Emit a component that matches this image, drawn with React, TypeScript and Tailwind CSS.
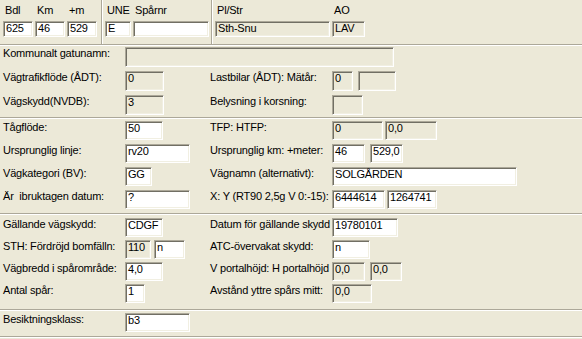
import React from 'react';

type BoxProps = { c: string; v?: string; off?: boolean };

function Box({ c, v, off }: BoxProps) {
  return (
    <div
      className={`${c} shrink-0 overflow-hidden whitespace-nowrap border border-t-[#ACA899] border-l-[#ACA899] border-b-white border-r-white shadow-[inset_1px_1px_0_#716F64,inset_-1px_-1px_0_#F1EFE2] pl-[2px] pt-[1px] leading-[11px] ${
        off ? 'bg-[#ECE9D8]' : 'bg-white'
      }`}
    >
      {v}
    </div>
  );
}

function Sep() {
  return <div className="h-[2px] w-full border-t border-t-[#ACA899] border-b border-b-white" />;
}

function VSep() {
  return <div className="w-[2px] h-full border-l border-l-[#ACA899] border-r border-r-white" />;
}

function Row({
  h,
  label,
  left,
  rlabel,
  right,
}: {
  h: string;
  label: string;
  left: React.ReactNode;
  rlabel?: string;
  right?: React.ReactNode;
}) {
  return (
    <div className={`flex items-start ${h}`}>
      <span className="w-[125px] shrink-0 pl-[3px] leading-[13px] whitespace-nowrap">{label}</span>
      <div className="w-[85px] shrink-0 flex gap-[3px] h-full">{left}</div>
      {rlabel !== undefined && (
        <span className="w-[122px] shrink-0 leading-[13px] whitespace-nowrap">{rlabel}</span>
      )}
      {right && <div className="flex gap-[2px] h-full">{right}</div>}
    </div>
  );
}

function Head({ label, c, v, off }: { label: string; c: string; v?: string; off?: boolean }) {
  return (
    <div className="flex flex-col">
      <span className="pl-[2px] h-[13px] leading-[13px] whitespace-nowrap">{label}</span>
      <div className="mt-[4px]">
        <Box c={c} v={v} off={off} />
      </div>
    </div>
  );
}

export default function App() {
  return (
    <div className="w-[582px] h-[339px] overflow-hidden bg-[#ECE9D8] text-black text-[11px] tracking-[-0.2px] font-['Liberation_Sans',Arial,sans-serif] flex flex-col">
      {/* header */}
      <div className="flex h-[44px] shrink-0">
        <div className="w-[101px] pl-[3px] pt-[4px] flex gap-[2px]">
          <Head label="Bdl" c="w-[30px] h-[16px]" v="625" />
          <Head label="Km" c="w-[30px] h-[16px]" v="46" />
          <Head label="+m" c="w-[30px] h-[16px]" v="529" />
        </div>
        <VSep />
        <div className="w-[108px] pl-[2px] pt-[4px] flex gap-[2px]">
          <Head label="UNE" c="w-[26px] h-[16px]" v="E" />
          <Head label="Spårnr" c="w-[76px] h-[16px]" />
        </div>
        <VSep />
        <div className="pl-[2px] pt-[4px] flex gap-[2px]">
          <Head label="Pl/Str" c="w-[115px] h-[16px]" v="Sth-Snu" off />
          <Head label="AO" c="w-[33px] h-[16px]" v="LAV" off />
        </div>
      </div>
      <Sep />

      {/* väg */}
      <div className="flex flex-col gap-[4px] pt-[1px] pb-[2px]">
        <div className="flex items-start h-[20px]">
          <span className="w-[125px] shrink-0 pl-[3px] leading-[13px] whitespace-nowrap">Kommunalt gatunamn:</span>
          <Box c="w-[269px] h-[20px]" off />
        </div>
        <Row
          h="h-[20px]"
          label="Vägtrafikflöde (ÅDT):"
          left={<Box c="w-[39px] h-[20px]" v="0" off />}
          rlabel="Lastbilar (ÅDT): Mätår:"
          right={
            <>
              <Box c="w-[21px] h-[20px]" v="0" off />
              <div className="w-[1px]" />
              <Box c="w-[38px] h-[20px]" off />
            </>
          }
        />
        <Row
          h="h-[20px]"
          label="Vägskydd(NVDB):"
          left={<Box c="w-[39px] h-[20px]" v="3" off />}
          rlabel="Belysning i korsning:"
          right={<Box c="w-[31px] h-[20px]" off />}
        />
      </div>
      <Sep />

      {/* tåg */}
      <div className="flex flex-col gap-[4px] pt-[2px] pb-[4px]">
        <Row
          h="h-[19px]"
          label="Tågflöde:"
          left={<Box c="w-[38px] h-[19px]" v="50" />}
          rlabel="TFP: HTFP:"
          right={
            <>
              <Box c="w-[51px] h-[19px]" v="0" off />
              <Box c="w-[52px] h-[19px]" v="0,0" off />
            </>
          }
        />
        <Row
          h="h-[19px]"
          label="Ursprunglig linje:"
          left={<Box c="w-[65px] h-[19px]" v="rv20" />}
          rlabel="Ursprunglig km: +meter:"
          right={
            <>
              <Box c="w-[33px] h-[19px]" v="46" />
              <div className="w-[1px]" />
              <Box c="w-[33px] h-[19px]" v="529,0" />
            </>
          }
        />
        <Row
          h="h-[19px]"
          label="Vägkategori (BV):"
          left={<Box c="w-[27px] h-[19px]" v="GG" />}
          rlabel="Vägnamn (alternativt):"
          right={<Box c="w-[185px] h-[19px]" v="SOLGÅRDEN" />}
        />
        <Row
          h="h-[19px]"
          label={'Är\u00a0 ibruktagen datum:'}
          left={<Box c="w-[65px] h-[19px]" v="?" />}
          rlabel="X: Y (RT90 2,5g V 0:-15):"
          right={
            <>
              <Box c="w-[53px] h-[19px]" v="6444614" />
              <Box c="w-[50px] h-[19px]" v="1264741" />
            </>
          }
        />
      </div>
      <Sep />

      {/* skydd */}
      <div className="flex flex-col gap-[3px] pt-[3px] pb-[6px]">
        <Row
          h="h-[19px]"
          label="Gällande vägskydd:"
          left={<Box c="w-[38px] h-[19px]" v="CDGF" />}
          rlabel="Datum för gällande skydd"
          right={<Box c="w-[66px] h-[19px]" v="19780101" />}
        />
        <Row
          h="h-[19px]"
          label="STH: Fördröjd bomfälln:"
          left={
            <>
              <Box c="w-[26px] h-[19px]" v="110" off />
              <Box c="w-[31px] h-[19px]" v="n" />
            </>
          }
          rlabel="ATC-övervakat skydd:"
          right={<Box c="w-[38px] h-[19px]" v="n" />}
        />
        <Row
          h="h-[19px]"
          label="Vägbredd i spårområde:"
          left={<Box c="w-[38px] h-[19px]" v="4,0" />}
          rlabel="V portalhöjd: H portalhöjd"
          right={
            <>
              <Box c="w-[33px] h-[19px]" v="0,0" off />
              <div className="w-[1px]" />
              <Box c="w-[32px] h-[19px]" v="0,0" off />
            </>
          }
        />
        <Row
          h="h-[19px]"
          label="Antal spår:"
          left={<Box c="w-[20px] h-[19px]" v="1" />}
          rlabel="Avstånd yttre spårs mitt:"
          right={<Box c="w-[40px] h-[19px]" v="0,0" off />}
        />
      </div>
      <Sep />

      {/* besiktning */}
      <div className="flex flex-col pt-[2px] pb-[4px]">
        <Row h="h-[19px]" label="Besiktningsklass:" left={<Box c="w-[65px] h-[19px]" v="b3" />} />
      </div>
      <Sep />
    </div>
  );
}
